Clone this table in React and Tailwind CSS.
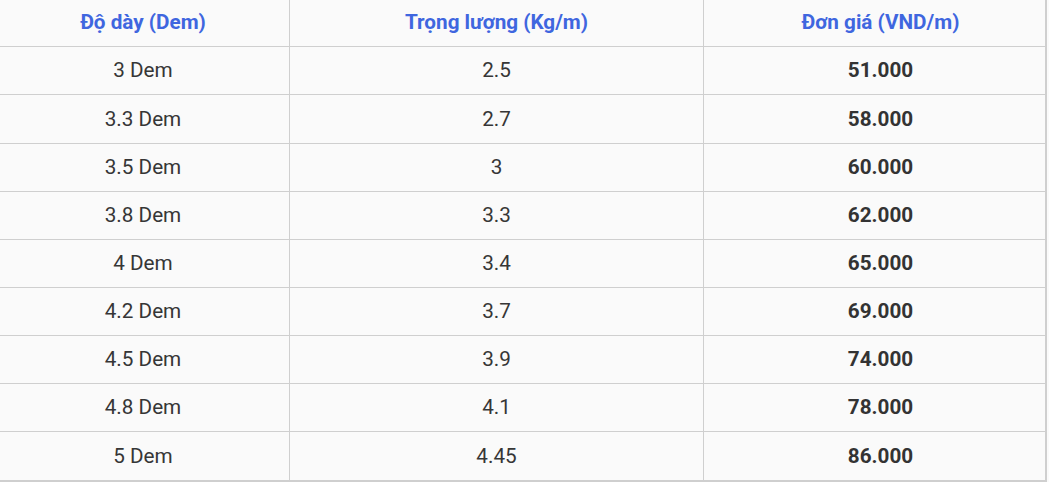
import React from 'react';

const rows = [
  ['3 Dem', '2.5', '51.000'],
  ['3.3 Dem', '2.7', '58.000'],
  ['3.5 Dem', '3', '60.000'],
  ['3.8 Dem', '3.3', '62.000'],
  ['4 Dem', '3.4', '65.000'],
  ['4.2 Dem', '3.7', '69.000'],
  ['4.5 Dem', '3.9', '74.000'],
  ['4.8 Dem', '4.1', '78.000'],
  ['5 Dem', '4.45', '86.000'],
];

const App = () => {
  return (
    <div className="w-[1049px] h-[482px] overflow-hidden bg-[#fafafa] font-['Roboto',sans-serif] text-[20.7px]">
      <div className="ml-[-3px] w-[1050px] border-r-2 border-b-2 border-[#cfcfcf]">
        {/* header */}
        <div className="grid grid-cols-[293px_414px_341px] h-[47px] border-b border-[#cfcfcf]">
          <div className="flex items-center justify-center font-bold text-[#3f66df] border-r border-[#cfcfcf]">Độ dày (Dem)</div>
          <div className="flex items-center justify-center font-bold text-[#3f66df] border-r border-[#cfcfcf]">Trọng lượng (Kg/m)</div>
          <div className="flex items-center justify-center pl-[12px] font-bold text-[#3f66df]">Đơn giá (VND/m)</div>
        </div>
        {rows.map((r, i) => (
          <div
            key={r[0]}
            className={`grid grid-cols-[293px_414px_341px] ${i === 1 ? 'h-[49px]' : 'h-[48px]'} ${i < rows.length - 1 ? 'border-b border-[#cfcfcf]' : ''}`}
          >
            <div className="flex items-center justify-center pt-px text-[#363636] border-r border-[#cfcfcf]">{r[0]}</div>
            <div className="flex items-center justify-center pt-px text-[#363636] border-r border-[#cfcfcf]">{r[1]}</div>
            <div className="flex items-center justify-center pt-px pl-[12px] font-bold text-[#333]">{r[2]}</div>
          </div>
        ))}
      </div>
    </div>
  );
};

export default App;
